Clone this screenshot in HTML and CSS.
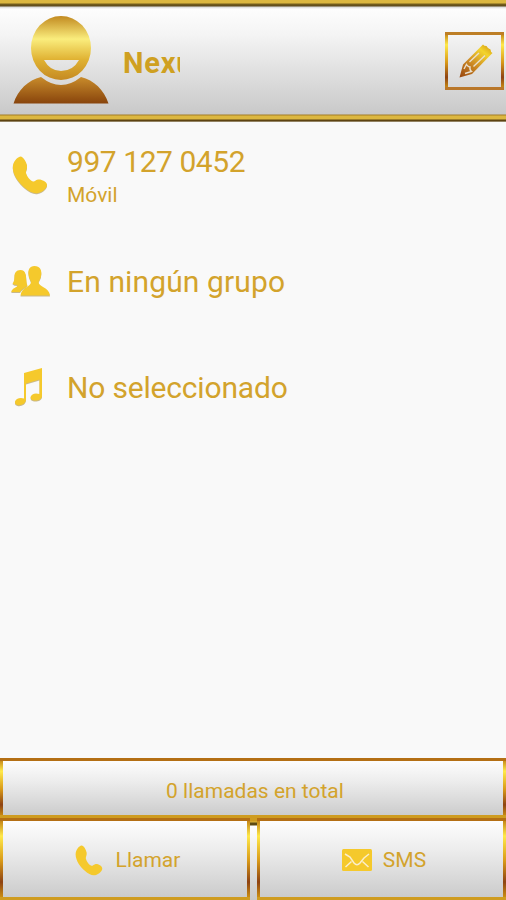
FILE: index.html
```html
<!DOCTYPE html>
<html lang="es">
<head>
    <meta charset="UTF-8">
    <meta name="viewport" content="width=device-width, initial-scale=1.0">
    <title>Contacto</title>
    <link rel="stylesheet" href="styles.css">
</head>
<body>
    <svg class="defs" width="0" height="0">
        <defs>
            <linearGradient id="head-gold" x1="0" y1="0" x2="0" y2="1">
                <stop offset="0" stop-color="#c28a20"/>
                <stop offset="0.36" stop-color="#faed7d"/>
                <stop offset="0.68" stop-color="#e0b233"/>
                <stop offset="1" stop-color="#c58a22"/>
            </linearGradient>
            <linearGradient id="body-gold" x1="0" y1="0" x2="0" y2="1">
                <stop offset="0" stop-color="#c98c2b"/>
                <stop offset="1" stop-color="#88440c"/>
            </linearGradient>
            <linearGradient id="pencil-gold" x1="0.9" y1="0" x2="0.1" y2="1">
                <stop offset="0" stop-color="#d49a10"/>
                <stop offset="0.22" stop-color="#f3d42c"/>
                <stop offset="0.6" stop-color="#cd8a24"/>
                <stop offset="1" stop-color="#9c4b10"/>
            </linearGradient>
            <symbol id="icon-phone" viewBox="0 0 36 38">
                <path d="M8.500 .5C5 1 .8 6 .8 11.500C.8 19 7 27 13 32C17 35.500 22 38 26 37C31 36 35.500 31.500 35 28.500C34.500 25.500 29.500 23 26 23.500C23 24 23 26 21 25.500C18 24.500 15 20.500 14 17C13.500 14.500 15.500 13 15 9.500C14.500 6 11 .3 8.500 .5Z"/>
            </symbol>
        </defs>
    </svg>

    <header class="header">
        <svg class="avatar" width="96" height="90" viewBox="0 0 96 90">
            <path fill="url(#body-gold)" d="M28 62Q48 78 68 62C81 65 91 75 95.500 88.500H.500C5 75 15 65 28 62Z"/>
            <path fill="url(#head-gold)" fill-rule="evenodd" d="M48 1A30 32 0 1 1 48 65A30 32 0 1 1 48 1ZM31 45Q37 56 48 56Q60 56 66 45Z"/>
        </svg>
        <div class="name">Nexus</div>
        <button class="edit frame" aria-label="Editar">
            <svg width="34" height="36" viewBox="0 0 34 36">
                <path fill="url(#pencil-gold)" d="M.500 34.500L4 21.500L24 1.500Q25 3 27.500 3Q29 6 31.500 6.500Q31.500 9 33.500 10L13 31Z"/>
                <path class="pencil-lines" d="M10.500 19L20 10M14.500 23.500L26 12.500M5 26L7.500 21.500Q9 24 11 24Q10.500 27 12.500 28.500L6 30.500"/>
            </svg>
        </button>
    </header>

    <main class="details">
        <div class="row">
            <svg class="icon shadow" width="36" height="38"><use href="#icon-phone"/></svg>
            <div class="row-text">
                <div class="number">997 127 0452</div>
                <div class="label">Móvil</div>
            </div>
        </div>
        <div class="row">
            <svg class="icon group shadow" width="39" height="30" viewBox="0 0 39 30">
                <path d="M9.500 4C5 4 3.500 7 3.500 10.500C3.500 14 2.500 16.500 1.500 17.500Q3 19 6.500 19C6.500 22 1 21.500 .3 26H9C11 23 14 22 16.500 19.500C15 17 15.500 10 14.500 8Q13.500 4 9.500 4Z"/>
                <path d="M23.500 0C18.500 0 17 4 17.500 8C17.800 12 19.500 14 20 16C20 21 10.500 21 9.500 29.500H39C38 21 27.500 21 27.500 16C28.500 14 30 12 30.300 8C30.600 4 29 0 23.500 0Z"/>
            </svg>
            <div class="row-text group-name">En ningún grupo</div>
        </div>
        <div class="row">
            <svg class="icon music shadow" width="29" height="38" viewBox="0 0 29 38">
                <path fill-rule="evenodd" d="M10 5L28 0V28C28 31.500 23.500 33 20 32.500C16 32 15.500 28.500 18.500 26.500Q21 24.800 25.500 26V11.500L12 15.500V31C12 36 7 37.800 3.500 37C0 36.200.500 32.500 3 31Q6 29.500 10 30.500Z"/>
            </svg>
            <div class="row-text ringtone">No seleccionado</div>
        </div>
    </main>

    <footer class="footer">
        <div class="total frame">0 llamadas en total</div>
        <div class="actions">
            <button class="action call frame">
                <svg class="icon" width="28" height="31" viewBox="0 0 36 38" preserveAspectRatio="none"><use href="#icon-phone" width="36" height="38"/></svg>
                <span>Llamar</span>
            </button>
            <div class="gap"></div>
            <button class="action sms frame">
                <svg class="icon" width="30" height="22" viewBox="0 0 30 22">
                    <rect width="30" height="22" rx="1.500"/>
                    <path class="fold" d="M3 5L8 8L12 14Q15 17.500 18 14L22 9L27 5M3.500 18L9.500 12.500M26.500 18L20.500 12.500"/>
                </svg>
                <span>SMS</span>
            </button>
        </div>
    </footer>
</body>
</html>
```

FILE: styles.css
```css
* {
    box-sizing: border-box;
}
body {
    display: flex;
    flex-direction: column;
    height: 900px;
    margin: 0;
    overflow: hidden;
    font-family: Roboto, sans-serif;
    color: #d3a32c;
    background-color: #f9f9f9;
}
button {
    padding: 0;
    border: none;
    font: inherit;
    color: inherit;
    cursor: pointer;
}
.defs {
    position: absolute;
}
.header {
    display: flex;
    align-items: center;
    height: 122px;
    padding: 3px 2px 4px 13px;
    background: linear-gradient(#dcb740 0, #dcb740 3px, #77601d 4px, #5d491b 6px, #d8d8d8 7px, #fdfdfd 9px, #f4f4f4 35px, #c9c9c9 114px, #a37c24 115px, #dcb740 116px, #dcb740 119px, #5d4312 120px, #5d4312 121px, #c8c2b4 122px);
}
.avatar {
    flex: none;
    margin: -2px 0 0 0;
}
.name {
    width: 57px;
    margin-left: 14px;
    padding-top: 5px;
    overflow: hidden;
    font-size: 29px;
    font-weight: bold;
    line-height: 36px;
    letter-spacing: 0.8px;
    white-space: nowrap;
    color: #cfa021;
}

/* gold frame: flat top and bottom edges, shiny sides */
.frame {
    --edge: 3px;
    --side: linear-gradient(#b9730f, #ffe94a 22%, #d99a18 52%, #8e4313 78%, #d69b13);
    background:
        linear-gradient(#b46f14, #b46f14) top / 100% 3px no-repeat,
        linear-gradient(#cf9c20, #cf9c20) bottom / 100% 3px no-repeat,
        var(--side) left / var(--edge) 100% no-repeat,
        var(--side) right / var(--edge) 100% no-repeat,
        linear-gradient(#ffffff, #ececec 40%, #c9c9c9);
}
.edit {
    display: flex;
    align-items: center;
    justify-content: center;
    width: 59px;
    height: 58px;
    margin-left: auto;
    padding-left: 2px;
    background:
        linear-gradient(#bd7e25, #bd7e25) top / 100% 3px no-repeat,
        linear-gradient(#b9772a, #b9772a) bottom / 100% 3px no-repeat,
        var(--side) left / var(--edge) 100% no-repeat,
        var(--side) right / var(--edge) 100% no-repeat;
}
.pencil-lines {
    fill: none;
    stroke: #e9dfce;
    stroke-width: 1.4;
}

.details {
    flex: 1;
    font-size: 30px;
}
.row {
    display: flex;
    align-items: center;
    height: 106px;
    padding-left: 12px;
}
.icon {
    flex: none;
    fill: #f5c92c;
}
.shadow {
    filter: drop-shadow(0 1px 0.5px #c9b98b);
}
.group {
    margin: -1px 0 0 -1px;
}
.music {
    margin: -1px 0 0 2px;
}
.row-text {
    margin-left: auto;
    padding-top: 2px;
    width: 439px;
    line-height: 36px;
}
.number {
    padding-top: 3px;
    letter-spacing: -0.45px;
}
.label {
    font-size: 21px;
    line-height: 31px;
}
.group-name {
    letter-spacing: 0.12px;
}
.ringtone {
    letter-spacing: -0.18px;
}

.footer {
    height: 142px;
}
.total {
    display: flex;
    align-items: center;
    justify-content: center;
    height: 60px;
    padding: 6px 0 0 4px;
    font-size: 21px;
}
.actions {
    display: flex;
    height: 82px;
}
.action {
    display: flex;
    align-items: center;
    justify-content: center;
    width: 250px;
    padding: 2px 0 0 5px;
    font-size: 21px;
}
.action span {
    margin-left: 13px;
}
.gap {
    width: 7px;
    background: linear-gradient(#cf9c20 3px, #dcb740 4px, #5d4a12 5px, #5d4a12 7px, #ffffff 8px, #c9c9c9);
}
.sms {
    width: 249px;
}
.sms span {
    margin-left: 11px;
}
.fold {
    fill: none;
    stroke: #fbeecb;
    stroke-width: 1.5;
}
```
